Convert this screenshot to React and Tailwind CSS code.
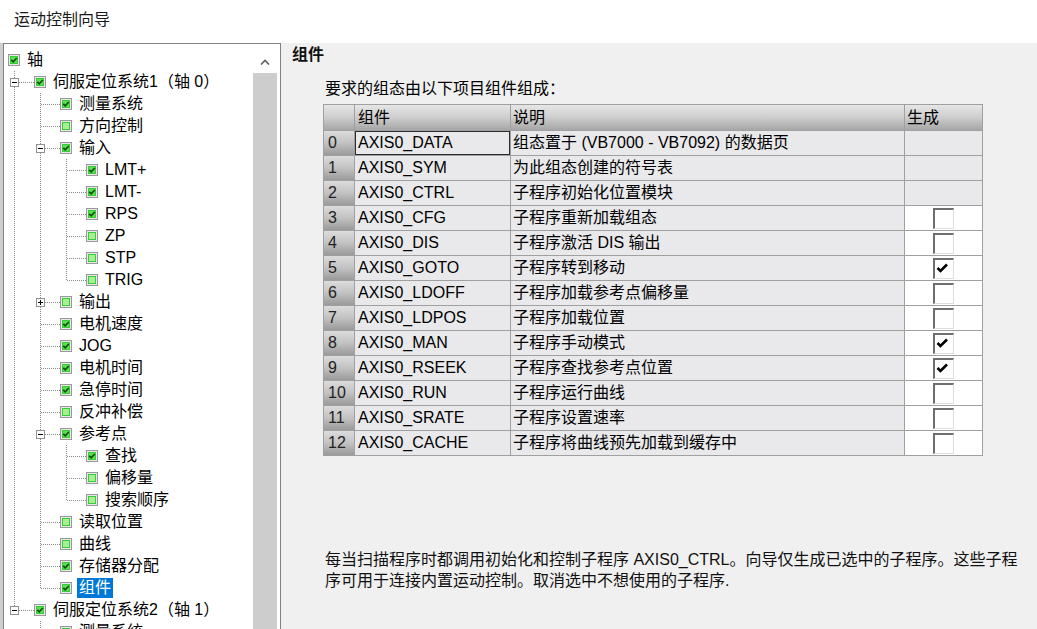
import React from 'react'

// flat tree: [level, label, checked, expander, selected]
const TREE = [
  [0, '轴', 1],
  [1, '伺服定位系统1（轴 0）', 1, '-'],
  [2, '测量系统', 1],
  [2, '方向控制', 0],
  [2, '输入', 1, '-'],
  [3, 'LMT+', 1],
  [3, 'LMT-', 1],
  [3, 'RPS', 1],
  [3, 'ZP', 0],
  [3, 'STP', 0],
  [3, 'TRIG', 0],
  [2, '输出', 0, '+'],
  [2, '电机速度', 1],
  [2, 'JOG', 1],
  [2, '电机时间', 1],
  [2, '急停时间', 1],
  [2, '反冲补偿', 0],
  [2, '参考点', 1, '-'],
  [3, '查找', 1],
  [3, '偏移量', 0],
  [3, '搜索顺序', 0],
  [2, '读取位置', 0],
  [2, '曲线', 0],
  [2, '存储器分配', 1],
  [2, '组件', 1, null, true],
  [1, '伺服定位系统2（轴 1）', 1, '-'],
  [2, '测量系统', 1],
  [2, '方向控制', 0],
].map(([level, label, checked, exp, sel]) => ({ level, label, checked: !!checked, exp, sel: !!sel }))

const COMPONENTS = [
  ['AXIS0_DATA', '组态置于 (VB7000 - VB7092) 的数据页', null],
  ['AXIS0_SYM', '为此组态创建的符号表', null],
  ['AXIS0_CTRL', '子程序初始化位置模块', null],
  ['AXIS0_CFG', '子程序重新加载组态', false],
  ['AXIS0_DIS', '子程序激活 DIS 输出', false],
  ['AXIS0_GOTO', '子程序转到移动', true],
  ['AXIS0_LDOFF', '子程序加载参考点偏移量', false],
  ['AXIS0_LDPOS', '子程序加载位置', false],
  ['AXIS0_MAN', '子程序手动模式', true],
  ['AXIS0_RSEEK', '子程序查找参考点位置', true],
  ['AXIS0_RUN', '子程序运行曲线', false],
  ['AXIS0_SRATE', '子程序设置速率', false],
  ['AXIS0_CACHE', '子程序将曲线预先加载到缓存中', false],
]

// which connector to draw in each indent column of row i
function connectors(rows, i) {
  const L = rows[i].level
  const out = []
  for (let d = 0; d < L; d++) {
    let j = i + 1
    while (j < rows.length && rows[j].level > d + 1) j++
    const cont = j < rows.length && rows[j].level === d + 1
    if (d === L - 1) out.push(cont ? 'tee' : 'elbow')
    else out.push(cont ? 'pipe' : 'blank')
  }
  return out
}

const DOT = { stroke: '#8a8a8a', strokeWidth: 1, strokeDasharray: '1 1' }

function Conn({ kind, exp }) {
  const own = kind === 'tee' || kind === 'elbow'
  const w = own ? 30 : 26
  return (
    <svg width={w} height="22" className="block shrink-0">
      {kind !== 'blank' && (
        <line x1="10.5" x2="10.5" y1="0" y2={kind === 'elbow' ? 12 : 22} {...DOT} />
      )}
      {own && <line x1="11" x2="30" y1="11.5" y2="11.5" {...DOT} />}
      {own && exp && (
        <g>
          <rect x="6.5" y="7.5" width="8" height="8" fill="#fff" stroke="#919191" />
          <line x1="8" x2="13" y1="11.5" y2="11.5" stroke="#000" />
          {exp === '+' && <line x1="10.5" x2="10.5" y1="9" y2="14" stroke="#000" />}
        </g>
      )}
    </svg>
  )
}

function TreeCheck({ checked }) {
  return (
    <svg width="12" height="12" className="block shrink-0">
      <rect x="0.5" y="0.5" width="11" height="11" fill="#e8e8e8" stroke="#999" />
      <rect x="2" y="2" width="8" height="8" fill="#35cf35" />
      {checked ? (
        <>
          <rect x="3" y="3" width="6" height="6" fill="#5fdc55" />
          <path d="M3.2 5.8 L5.2 7.8 L8.8 4" fill="none" stroke="#0c4f0c" strokeWidth="1.7" />
        </>
      ) : (
        <rect x="3" y="3" width="6" height="6" fill="#a8ee94" />
      )}
    </svg>
  )
}

function TreeRow({ row, conns }) {
  return (
    <div className="h-[22px] flex items-center">
      {conns.map((k, d) => (
        <Conn key={d} kind={k} exp={d === row.level - 1 ? row.exp : null} />
      ))}
      {row.level === 0 && <div className="w-[4px] shrink-0" />}
      <TreeCheck checked={row.checked} />
      <span className={`ml-[5px] px-[2px] leading-[20px] whitespace-nowrap ${row.sel ? 'bg-[#0078d7] text-white' : 'text-black'}`}>
        {row.label}
      </span>
    </div>
  )
}

function GenBox({ checked }) {
  return (
    <div className="w-[21px] h-[21px] bg-white border-t-2 border-l-2 border-r border-b border-t-[#6e6e6e] border-l-[#6e6e6e] border-r-[#dedede] border-b-[#dedede] flex items-center justify-center">
      {checked && (
        <svg width="18" height="18" className="block">
          <path d="M2.5 8 L5.5 11 L12 4.5" fill="none" stroke="#000" strokeWidth="2.6" />
        </svg>
      )}
    </div>
  )
}

const cell = 'border-r border-b border-[#a0a0a0] flex items-center leading-[20px] whitespace-nowrap'
const head = 'bg-linear-to-b from-[#e6e6e6] via-[#cdcdcd] to-[#a6a6a6]'
const rowHead = 'bg-linear-to-b from-[#dcdcdc] via-[#c2c2c2] to-[#9a9a9a]'

export default function App() {
  return (
    <div className="w-[1037px] h-[629px] overflow-hidden flex flex-col bg-white text-[16px] text-black font-['Liberation_Sans','Noto_Sans_CJK_SC',sans-serif]">
      {/* title */}
      <div className="h-[43px] shrink-0 pl-[14px] pt-[10px] leading-[20px] text-[#1a1a1a]">运动控制向导</div>

      <div className="flex flex-1 min-h-0">
        <div className="w-[3px] shrink-0 bg-[#cfcfcf]" />

        {/* tree panel */}
        <div className="w-[278px] shrink-0 flex border-t border-l border-r border-[#828282]">
          <div className="w-[249px] shrink-0 bg-white pt-[5px] overflow-hidden">
            {TREE.map((r, i) => (
              <TreeRow key={i} row={r} conns={connectors(TREE, i)} />
            ))}
          </div>
          <div className="w-[24px] shrink-0 flex flex-col">
            <div className="h-[29px] bg-white flex justify-center pt-[15px]">
              <svg width="10" height="6" className="block">
                <path d="M1 5.5 L5 1.5 L9 5.5" fill="none" stroke="#606060" strokeWidth="1.6" />
              </svg>
            </div>
            <div className="flex-1 bg-[#cdcdcd]" />
          </div>
          <div className="w-[3px] shrink-0 bg-white" />
        </div>

        {/* right pane */}
        <div className="flex-1 bg-[#f0f0f0] flex flex-col">
          <div className="pl-[11px] pt-[2px] leading-[20px] font-bold text-[#111]">组件</div>
          <div className="ml-[44px] mt-[14px] leading-[20px]">要求的组态由以下项目组件组成：</div>

          <div className="ml-[42px] mt-[5px] w-[660px] border-t border-l border-[#a0a0a0] grid grid-cols-[31px_156px_394px_78px]">
            <div className={`${cell} ${head} h-[26px]`} />
            <div className={`${cell} ${head} h-[26px] pl-[3px]`}>组件</div>
            <div className={`${cell} ${head} h-[26px] pl-[2px]`}>说明</div>
            <div className={`${cell} ${head} h-[26px] pl-[2px]`}>生成</div>

            {COMPONENTS.map(([name, desc, gen], i) => (
              <React.Fragment key={name}>
                <div className={`${cell} ${rowHead} h-[25px] pl-[4px] text-[#222]`}>{i}</div>
                <div className={`${cell} h-[25px] pl-[3px] bg-[#e9e9eb] ${i === 0 ? 'shadow-[inset_0_0_0_1px_#2b2b2b]' : ''}`}>{name}</div>
                <div className={`${cell} h-[25px] pl-[2px] bg-[#e9e9eb]`}>{desc}</div>
                <div className={`${cell} h-[25px] justify-center ${gen === null ? 'bg-[#e9e9eb]' : 'bg-white'}`}>
                  {gen !== null && <GenBox checked={gen} />}
                </div>
              </React.Fragment>
            ))}
          </div>

          <div className="ml-[44px] mt-[93px] leading-[21px] whitespace-nowrap text-[#111]">
            每当扫描程序时都调用初始化和控制子程序 AXIS0_CTRL。向导仅生成已选中的子程序。这些子程
            <br />
            序可用于连接内置运动控制。取消选中不想使用的子程序.
          </div>
        </div>
      </div>
    </div>
  )
}
